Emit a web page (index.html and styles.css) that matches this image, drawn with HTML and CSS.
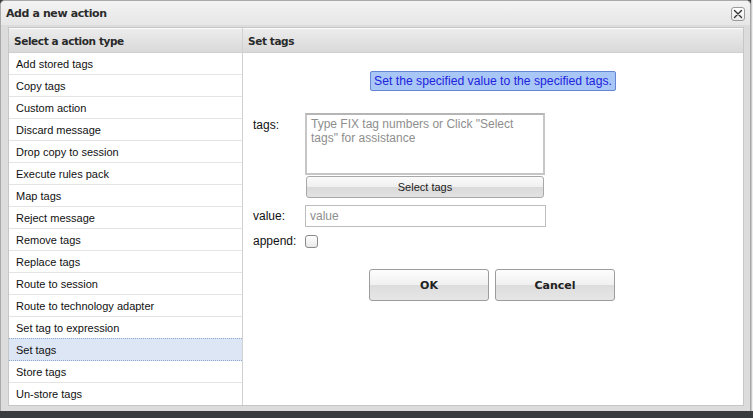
FILE: index.html
```html
<!DOCTYPE html>
<html>
<head>
<meta charset="utf-8">
<link rel="stylesheet" href="styles.css">
</head>
<body>
<div class="screen">
  <div class="dialog">
    <div class="titlebar">
      <span class="title">Add a new action</span>
      <span class="close">
        <svg width="10" height="10" viewBox="0 0 10 10"><path d="M1.5 1.5 L8.5 8.5 M8.5 1.5 L1.5 8.5" stroke="#333" stroke-width="1.4" stroke-linecap="round"/></svg>
      </span>
    </div>
    <div class="content">
      <div class="panel">
        <div class="col-left">
          <div class="head">Select a action type</div>
          <ul class="list">
            <li>Add stored tags</li>
            <li>Copy tags</li>
            <li>Custom action</li>
            <li>Discard message</li>
            <li>Drop copy to session</li>
            <li>Execute rules pack</li>
            <li>Map tags</li>
            <li>Reject message</li>
            <li>Remove tags</li>
            <li>Replace tags</li>
            <li>Route to session</li>
            <li>Route to technology adapter</li>
            <li>Set tag to expression</li>
            <li class="selected">Set tags</li>
            <li>Store tags</li>
            <li>Un-store tags</li>
          </ul>
        </div>
        <div class="col-right">
          <div class="head">Set tags</div>
          <div class="body">
            <div class="desc">Set the specified value to the specified tags.</div>
            <div class="form">
              <label class="lbl lbl-tags">tags:</label>
              <div class="field">
                <div class="textarea">Type FIX tag numbers or Click "Select tags" for assistance</div>
                <div class="selbtn">Select tags</div>
              </div>
              <label class="lbl">value:</label>
              <div class="field"><div class="input">value</div></div>
              <label class="lbl">append:</label>
              <div class="field"><span class="check"></span></div>
            </div>
            <div class="buttons">
              <div class="btn">OK</div>
              <div class="btn">Cancel</div>
            </div>
          </div>
        </div>
      </div>
    </div>
  </div>
  <div class="behind"></div>
</div>
</body>
</html>
```
FILE: styles.css
```css
* { box-sizing: border-box; }
html, body { margin: 0; padding: 0; }
body {
  width: 753px;
  height: 418px;
  overflow: hidden;
  background: #3a3d40;
  font-family: "Liberation Sans", Arial, sans-serif;
}
.screen {
  display: flex;
  align-items: flex-start;
  height: 418px;
}
.dialog {
  width: 751px;
  height: 411px;
  border: 1px solid #a9a9a9;
  border-bottom: none;
  border-radius: 5px 5px 0 0;
  background: #dcdcdc;
  display: flex;
  flex-direction: column;
}
.behind {
  width: 2px;
  height: 411px;
  background: #eeeeee;
  border-left: 1px solid #c9c9c9;
}
.titlebar {
  height: 24px;
  flex: none;
  display: flex;
  align-items: center;
  justify-content: space-between;
  padding: 0 5px 0 5px;
  background: linear-gradient(#f3f3f3, #e6e6e6);
  border-radius: 4px 4px 0 0;
}
.title {
  font-family: "DejaVu Sans", Verdana, sans-serif;
  font-weight: bold;
  font-size: 11px;
  color: #2b2b2b;
  letter-spacing: -0.4px;
  margin-top: 1px;
}
.close {
  width: 14px;
  height: 14px;
  margin-top: 2px;
  border: 1px solid #9a9a9a;
  border-radius: 3px;
  background: linear-gradient(#ffffff, #ececec);
  display: flex;
  align-items: center;
  justify-content: center;
}
.content {
  flex: 1;
  padding: 2px 6px 5px 7px;
  display: flex;
}
.panel {
  flex: 1;
  display: flex;
  border: 1px solid #c6c6c6;
  background: #fff;
}
.head {
  height: 25px;
  border-top: 1px solid #fafafa;
  border-bottom: 1px solid #cfcfcf;
  background: linear-gradient(#ececec, #d9d9d9);
  font-family: "DejaVu Sans", Verdana, sans-serif;
  font-weight: bold;
  font-size: 10.5px;
  color: #2a2a2a;
  letter-spacing: -0.4px;
  padding-left: 5px;
  display: flex;
  align-items: center;
}
.col-left {
  width: 234px;
  flex: none;
  border-right: 1px solid #d2d2d2;
}
.col-right {
  flex: 1;
  display: flex;
  flex-direction: column;
}
.list {
  list-style: none;
  margin: 0;
  padding: 0;
}
.list li {
  height: 22px;
  border-bottom: 1px solid #e4e4e4;
  padding-left: 7px;
  font-size: 11px;
  color: #111;
  display: flex;
  align-items: center;
}
.list li:last-child { border-bottom: none; }
.list li.selected {
  background: #dde6f4;
  border-top: 1px dotted #8ea6cc;
  border-bottom: 1px dotted #8ea6cc;
  margin-top: -1px;
  height: 23px;
}
.body {
  padding: 18px 0 0 10px;
  display: flex;
  flex-direction: column;
}
.desc {
  align-self: center;
  margin-left: -10px;
  height: 20px;
  padding: 0 3px;
  border: 1px solid #6486d4;
  border-radius: 2px;
  background: #a9c7f6;
  color: #2222dd;
  font-size: 12.2px;
  display: flex;
  align-items: center;
}
.form {
  margin-top: 22px;
  display: grid;
  grid-template-columns: 52px 241px;
  row-gap: 7px;
  align-items: center;
}
.lbl {
  font-size: 12px;
  color: #111;
}
.lbl-tags {
  align-self: start;
  margin-top: 5px;
}
.field { display: flex; flex-direction: column; }
.textarea {
  height: 62px;
  width: 240px;
  border: 2px solid #c6c6c6;
  border-top-color: #b5b5b5;
  padding: 2px 4px;
  font-size: 12px;
  line-height: 14px;
  color: #8e8e8e;
  background: #fff;
}
.selbtn {
  margin: 1px 2px 0 1px;
  height: 22px;
  border: 1px solid #a8a8a8;
  border-radius: 3px;
  background: linear-gradient(#fbfbfb 0%, #efefef 50%, #dadada 51%, #e2e2e2 100%);
  font-size: 11px;
  color: #222;
  display: flex;
  align-items: center;
  justify-content: center;
}
.input {
  height: 22px;
  width: 241px;
  border: 1px solid #bdbdbd;
  padding: 0 4px;
  font-size: 12px;
  color: #8e8e8e;
  display: flex;
  align-items: center;
}
.check {
  width: 13px;
  height: 13px;
  border: 1px solid #8a8a8a;
  border-radius: 3px;
  background: linear-gradient(#ffffff, #e9e9e9);
}
.buttons {
  margin-top: 21px;
  margin-left: -12px;
  display: flex;
  justify-content: center;
  gap: 6px;
}
.btn {
  width: 120px;
  height: 32px;
  border: 1px solid #9c9c9c;
  border-radius: 3px;
  background: linear-gradient(#fdfdfd 0%, #f0f0f0 50%, #dddddd 51%, #e6e6e6 100%);
  font-family: "DejaVu Sans", Verdana, sans-serif;
  font-weight: bold;
  font-size: 11px;
  color: #222;
  display: flex;
  align-items: center;
  justify-content: center;
}
```
